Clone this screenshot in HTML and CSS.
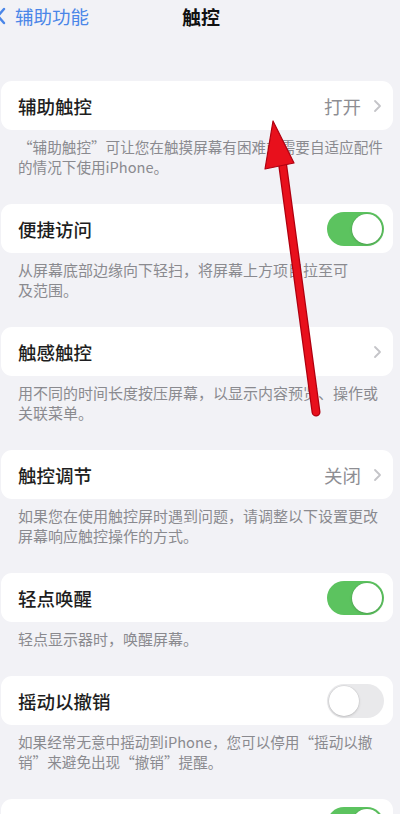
FILE: index.html
```html
<!DOCTYPE html>
<html lang="zh-CN">
<head>
<meta charset="utf-8">
<title>触控</title>
<link rel="stylesheet" href="styles.css">
</head>
<body>
<div class="page">
  <header class="nav">
    <div class="back">
      <svg class="back-chev" width="10" height="18" viewBox="0 0 10 18"><path d="M8 2 L2 9 L8 16" fill="none" stroke="#4a86e8" stroke-width="2.4" stroke-linecap="round" stroke-linejoin="round"/></svg>
      <span class="back-text">辅助功能</span>
    </div>
    <div class="title">触控</div>
    <div class="spacer"></div>
  </header>

  <main class="content">
    <section class="group">
      <div class="card">
        <span class="label">辅助触控</span>
        <span class="value">打开</span>
        <svg class="chev" width="9" height="14" viewBox="0 0 9 14"><path d="M2 2 L7 7 L2 12" fill="none" stroke="#c4c4c8" stroke-width="1.8" stroke-linecap="round" stroke-linejoin="round"/></svg>
      </div>
      <p class="footer footer-tight">“辅助触控”可让您在触摸屏幕有困难或需要自适应配件<br>的情况下使用iPhone。</p>
    </section>

    <section class="group">
      <div class="card">
        <span class="label">便捷访问</span>
        <span class="toggle on"><span class="knob"></span></span>
      </div>
      <p class="footer">从屏幕底部边缘向下轻扫，将屏幕上方项目拉至可<br>及范围。</p>
    </section>

    <section class="group">
      <div class="card">
        <span class="label">触感触控</span>
        <svg class="chev" width="9" height="14" viewBox="0 0 9 14"><path d="M2 2 L7 7 L2 12" fill="none" stroke="#c4c4c8" stroke-width="1.8" stroke-linecap="round" stroke-linejoin="round"/></svg>
      </div>
      <p class="footer">用不同的时间长度按压屏幕，以显示内容预览、操作或<br>关联菜单。</p>
    </section>

    <section class="group">
      <div class="card">
        <span class="label">触控调节</span>
        <span class="value">关闭</span>
        <svg class="chev" width="9" height="14" viewBox="0 0 9 14"><path d="M2 2 L7 7 L2 12" fill="none" stroke="#c4c4c8" stroke-width="1.8" stroke-linecap="round" stroke-linejoin="round"/></svg>
      </div>
      <p class="footer">如果您在使用触控屏时遇到问题，请调整以下设置更改<br>屏幕响应触控操作的方式。</p>
    </section>

    <section class="group">
      <div class="card">
        <span class="label">轻点唤醒</span>
        <span class="toggle on"><span class="knob"></span></span>
      </div>
      <p class="footer">轻点显示器时，唤醒屏幕。</p>
    </section>

    <section class="group">
      <div class="card">
        <span class="label">摇动以撤销</span>
        <span class="toggle off"><span class="knob"></span></span>
      </div>
      <p class="footer footer-tight">如果经常无意中摇动到iPhone，您可以停用“摇动以撤<br>销”来避免出现“撤销”提醒。</p>
    </section>

    <section class="group">
      <div class="card card-last">
        <span class="label">振动</span>
        <span class="toggle on"><span class="knob"></span></span>
      </div>
    </section>
  </main>

  <svg class="arrow" width="400" height="814" viewBox="0 0 400 814">
    <line x1="282" y1="160" x2="316" y2="412" stroke="#b00010" stroke-width="9" stroke-linecap="round"/>
    <line x1="282" y1="160" x2="316" y2="412" stroke="#e8101c" stroke-width="6.5" stroke-linecap="round"/>
    <polygon points="273,121 265,169 294,163" fill="#e8101c" stroke="#b00010" stroke-width="1.2" stroke-linejoin="round"/>
  </svg>
</div>
</body>
</html>
```

FILE: styles.css
```css
html, body {
  margin: 0;
  padding: 0;
}

body {
  background: #f2f2f6;
  font-family: "Noto Sans CJK SC", "Noto Sans", sans-serif;
  color: #1f1f22;
}

.page {
  position: relative;
  width: 400px;
  height: 814px;
  overflow: hidden;
}

.nav {
  height: 32px;
  display: grid;
  grid-template-columns: 1fr auto 1fr;
  align-items: center;
}

.back {
  display: flex;
  align-items: center;
  gap: 9px;
  margin-left: -4px;
}

.back-text {
  font-size: 18.5px;
  color: #4a86e8;
  line-height: 1;
}

.title {
  font-size: 19px;
  font-weight: 700;
  color: #111;
  line-height: 1;
  padding-left: 2px;
}

.content {
  padding-top: 49px;
}

.group {
  margin-bottom: 27px;
}

.card {
  height: 49px;
  margin: 0 7px 0 1px;
  background: #ffffff;
  border-radius: 11px;
  display: flex;
  align-items: center;
  padding: 0 9px 0 17px;
}

.card-last {
  align-items: flex-start;
  padding-top: 8px;
  box-sizing: border-box;
}

.card-last .label {
  padding-top: 14px;
}

.label {
  flex: 1;
  font-size: 18.5px;
  font-weight: 500;
  color: #1e1e21;
}

.value {
  font-size: 18.5px;
  color: #8e8e93;
  margin-right: 12px;
}

.chev {
  margin-right: 2px;
}

.footer {
  margin: 0;
  padding: 7px 4px 0 18px;
  font-size: 15px;
  line-height: 20px;
  color: #8a8a8f;
  white-space: nowrap;
  text-spacing-trim: space-all;
}

.footer-tight {
  font-size: 14.6px;
}

.toggle {
  width: 57px;
  height: 34px;
  border-radius: 17px;
  display: flex;
  align-items: center;
  padding: 2px;
  box-sizing: border-box;
}

.toggle.on {
  background: #5cc35f;
  justify-content: flex-end;
}

.toggle.off {
  background: #e9e9eb;
  justify-content: flex-start;
}

.knob {
  width: 30px;
  height: 30px;
  border-radius: 50%;
  background: #ffffff;
  box-shadow: 0 0 0 0.5px rgba(0, 0, 0, 0.08), 0 1px 3px rgba(0, 0, 0, 0.15);
}

.arrow {
  position: absolute;
  left: 0;
  top: 0;
  pointer-events: none;
}
```
